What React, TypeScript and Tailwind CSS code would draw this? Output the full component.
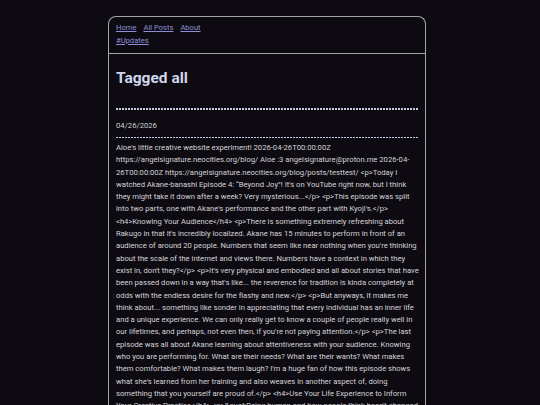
import React from "react";

const lines = [
  "Aloe's little creative website experiment! 2026-04-26T00:00:00Z",
  "https://angelsignature.neocities.org/blog/ Aloe :3 angelsignature@proton.me 2026-04-",
  "26T00:00:00Z https://angelsignature.neocities.org/blog/posts/testtest/ <p>Today I",
  "watched Akane-banashi Episode 4: \u201cBeyond Joy\u201d! It's on YouTube right now, but I think",
  "they might take it down after a week? Very mysterious...</p> <p>This episode was split",
  "into two parts, one with Akane's performance and the other part with Kyoji's.</p>",
  "<h4>Knowing Your Audience</h4> <p>There is something extremely refreshing about",
  "Rakugo in that it's incredibly localized. Akane has 15 minutes to perform in front of an",
  "audience of around 20 people. Numbers that seem like near nothing when you're thinking",
  "about the scale of the internet and views there. Numbers have a context in which they",
  "exist in, don't they?</p> <p>It's very physical and embodied and all about stories that have",
  "been passed down in a way that's like... the reverence for tradition is kinda completely at",
  "odds with the endless desire for the flashy and new.</p> <p>But anyways, it makes me",
  "think about... something like sonder in appreciating that every individual has an inner life",
  "and a unique experience. We can only really get to know a couple of people really well in",
  "our lifetimes, and perhaps, not even then, if you're not paying attention.</p> <p>The last",
  "episode was all about Akane learning about attentiveness with your audience. Knowing",
  "who you are performing for. What are their needs? What are their wants? What makes",
  "them comfortable? What makes them laugh? I'm a huge fan of how this episode shows",
  "what she's learned from her training and also weaves in another aspect of, doing",
  "something that you yourself are proud of.</p> <h4>Use Your Life Experience to Inform",
  "Your Creative Practice</h4> <p>&quot;Being human and how people think hasn't changed",
  "all that much over the centuries, and the stories still resonate with audiences today.&quot;</p>",
];

function Dashed() {
  return (
    <div className="h-[1.5px] w-full bg-[repeating-linear-gradient(to_right,#c9cbe6_0_2px,transparent_2px_3px)]" />
  );
}

export default function App() {
  return (
    <div className="h-[405px] overflow-hidden bg-[#0d0a12] pt-[16px] font-['Roboto',sans-serif]">
      <div className="ml-[108px] w-[318px] rounded-t-[8px] border-[1.5px] border-b-0 border-[#a3a3a8] bg-[#0d0a12] min-h-[420px]">
        <nav className="border-b-[1.5px] border-[#a3a3a8] px-[7px] pt-[5px] pb-[6px] text-[7.6px] leading-[12.5px] text-[#8d8fd6]">
          <div className="flex gap-[7px]">
            <a href="#" className="underline">Home</a>
            <a href="#" className="underline">All Posts</a>
            <a href="#" className="underline">About</a>
          </div>
          <div>
            <a href="#" className="underline">#Updates</a>
          </div>
        </nav>
        <main className="px-[7px]">
          <h1 className="pt-[14px] text-[15.5px] font-bold leading-[20px] text-[#cfd6ec]">Tagged all</h1>
          <div className="mt-[20px]">
            <Dashed />
          </div>
          <div className="pt-[10px] pb-[5px] text-[7.7px] leading-[12px] text-[#cfcfd2]">04/26/2026</div>
          <Dashed />
          <p className="pt-[4px] text-[7.65px] leading-[12.3px] text-[#d4d4d6] whitespace-nowrap">
            {lines.map((l, i) => (
              <React.Fragment key={i}>
                {l}
                {i < lines.length - 1 && <br />}
              </React.Fragment>
            ))}
          </p>
        </main>
      </div>
    </div>
  );
}
